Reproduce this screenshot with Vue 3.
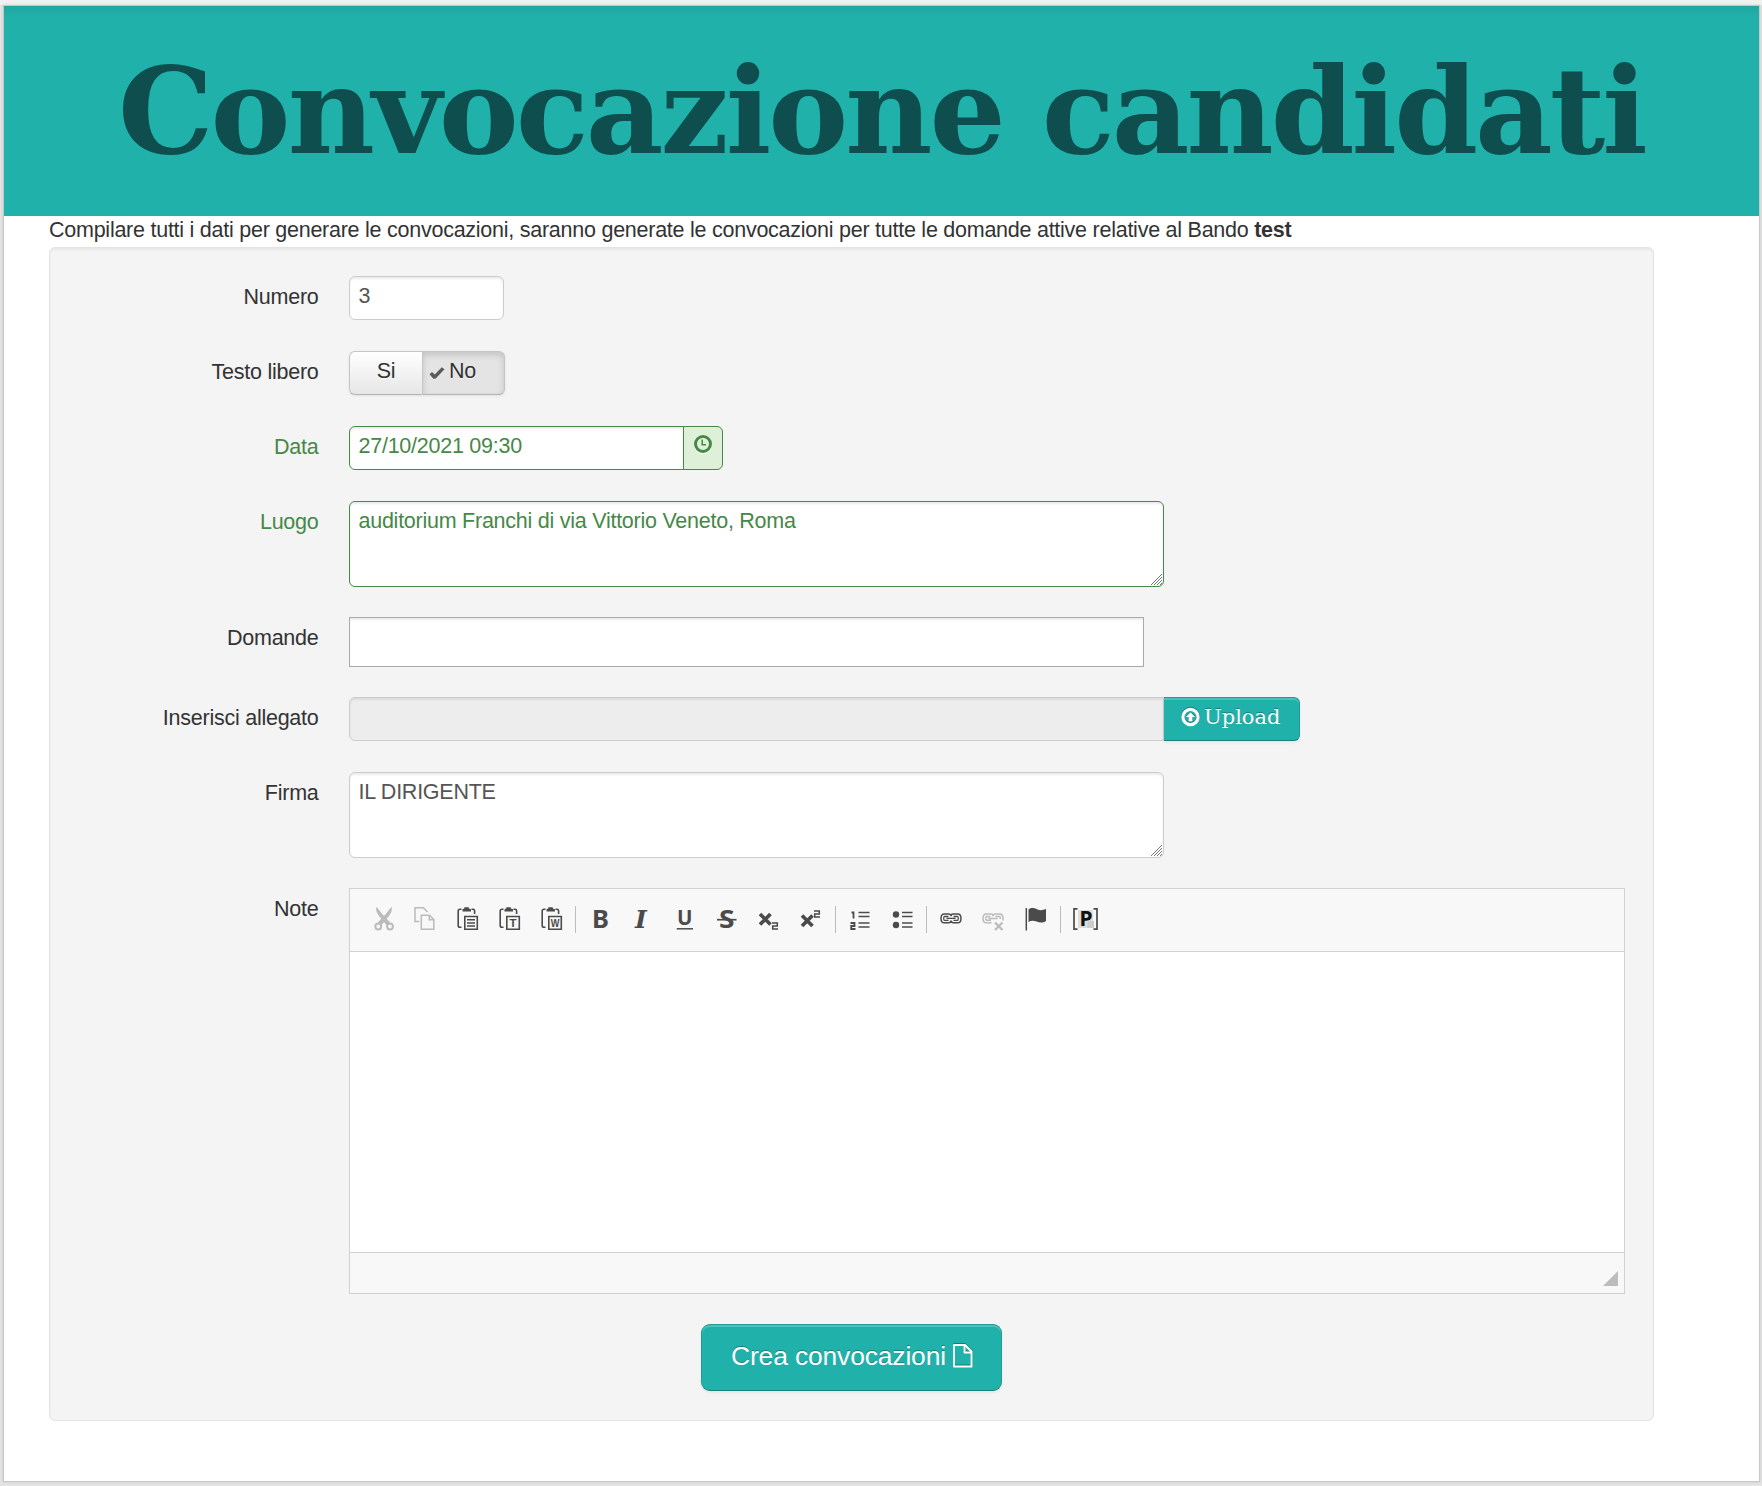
<script setup>
import { ref } from 'vue'

const numero = ref('3')
const data = ref('27/10/2021 09:30')
const luogo = ref('auditorium Franchi di via Vittorio Veneto, Roma')
const domande = ref('')
const firma = ref('IL DIRIGENTE')
</script>

<template>
  <div class="screen">
    <main class="page">
      <header class="banner"><h1>Convocazione candidati</h1></header>
      <p class="intro">Compilare tutti i dati per generare le convocazioni, saranno generate le convocazioni per tutte le domande attive relative al Bando <b>test</b></p>

      <form class="well" @submit.prevent>
        <div class="row">
          <label>Numero</label>
          <input v-model="numero" class="field numero">
        </div>

        <div class="row">
          <label>Testo libero</label>
          <div class="toggle">
            <button type="button" class="si">Si</button>
            <button type="button" class="no">
              <svg width="16" height="14" viewBox="0 0 16 14"><path d="M.5 8.3 3 6l2.700 2.400L12.800 1.200 15.500 3.300 6.500 12.700H4.300Z" fill="#5c5c5c" /></svg>No
            </button>
          </div>
        </div>

        <div class="row ok">
          <label>Data</label>
          <div class="group">
            <input v-model="data" class="field data">
            <span class="addon">
              <svg width="20" height="21" viewBox="0 0 20 21">
                <circle cx="10" cy="11" r="7.500" fill="none" stroke="#fff" stroke-width="3" />
                <g fill="none" stroke="#468847"><circle cx="10" cy="10" r="7.500" stroke-width="3" /><path d="M9.200 5.500V10.800H13" stroke-width="1.500" /></g>
              </svg>
            </span>
          </div>
        </div>

        <div class="row tall ok">
          <label>Luogo</label>
          <div class="area">
            <textarea v-model="luogo" class="field"></textarea>
            <svg class="grip" width="11" height="11" viewBox="0 0 11 11"><path d="M0 11 11 0M3 11 11 3M6 11 11 6M9 11 11 9" /></svg>
          </div>
        </div>

        <div class="row mid">
          <label>Domande</label>
          <input v-model="domande" class="field domande">
        </div>

        <div class="row">
          <label>Inserisci allegato</label>
          <div class="group">
            <input class="field file" disabled>
            <button type="button" class="upload">
              <svg width="19" height="20" viewBox="0 0 19 20">
                <circle cx="9.500" cy="10" r="7.600" fill="none" stroke="#fff" stroke-width="3.100" />
                <path d="M9.500 5.300 14 10H11.300V14.300H7.700V10H5Z" fill="#fff" />
              </svg>
              <span>Upload</span>
            </button>
          </div>
        </div>

        <div class="row tall">
          <label>Firma</label>
          <div class="area">
            <textarea v-model="firma" class="field"></textarea>
            <svg class="grip" width="11" height="11" viewBox="0 0 11 11"><path d="M0 11 11 0M3 11 11 3M6 11 11 6M9 11 11 9" /></svg>
          </div>
        </div>

        <div class="row">
          <label>Note</label>
          <div class="editor">
            <div class="toolbar">
              <!-- cut -->
              <a class="off"><svg viewBox="0 0 24 24"><path d="M5 1.500C4.500 4 5.500 6 8 9L15 17.500 17 15.300 9.200 7ZM19 1.500C19.500 4 18.500 6 16 9L9 17.500 7 15.300 14.800 7Z" fill="#4b4b4b" stroke="#4b4b4b" stroke-width="1.500" /><g fill="none" stroke="#4b4b4b" stroke-width="2"><circle cx="6.300" cy="19.500" r="2.900" /><circle cx="18" cy="19.500" r="2.900" /></g></svg></a>
              <!-- copy -->
              <a class="off"><svg viewBox="0 0 24 24"><path d="M5.500 14.500H1V.800H9.500L13.500 5M7.300 8.200H15.500L19.800 12.500V22.300H7.300ZM15.300 8.500V12.700H19.500" fill="none" stroke="#4b4b4b" stroke-width="1.500" /></svg></a>
              <!-- paste -->
              <a><svg viewBox="0 0 24 24"><path d="M5.500 2.200H4Q2.200 2.200 2.200 4V18.500Q2.200 20.300 4 20.300H5.500M15.500 2.200H17Q18.600 2.200 18.600 4V7M8.800 9.500H21.300V22.300H8.800Z" fill="none" stroke="#4b4b4b" stroke-width="1.600" /><path d="M6.500 4.500V2.200L8.300 1.500V.300H12.800V1.500L15 2.200V4.500Z" fill="#4b4b4b" /><path d="M11 12.700H19M11 15.900H19M11 19.100H19" stroke="#4b4b4b" stroke-width="1.500" /></svg></a>
              <!-- paste as plain text -->
              <a><svg viewBox="0 0 24 24"><path d="M5.500 2.200H4Q2.200 2.200 2.200 4V18.500Q2.200 20.300 4 20.300H5.500M15.500 2.200H17Q18.600 2.200 18.600 4V7M8.800 9.500H21.300V22.300H8.800Z" fill="none" stroke="#4b4b4b" stroke-width="1.600" /><path d="M6.500 4.500V2.200L8.300 1.500V.300H12.800V1.500L15 2.200V4.500Z" fill="#4b4b4b" /><text x="15" y="20" font-size="11.500" font-weight="700" text-anchor="middle">T</text></svg></a>
              <!-- paste from Word -->
              <a><svg viewBox="0 0 24 24"><path d="M5.500 2.200H4Q2.200 2.200 2.200 4V18.500Q2.200 20.300 4 20.300H5.500M15.500 2.200H17Q18.600 2.200 18.600 4V7M8.800 9.500H21.300V22.300H8.800Z" fill="none" stroke="#4b4b4b" stroke-width="1.600" /><path d="M6.500 4.500V2.200L8.300 1.500V.300H12.800V1.500L15 2.200V4.500Z" fill="#4b4b4b" /><text x="10.700" y="19.800" font-size="11" font-weight="700" textLength="8.700" lengthAdjust="spacingAndGlyphs">W</text></svg></a>
              <i class="sep"></i>
              <a><svg viewBox="0 0 24 24"><text x="3" y="21.300" class="glyph" font-size="25.500">B</text></svg></a>
              <a><svg viewBox="0 0 24 24"><text x="4" y="21.300" class="slab">I</text></svg></a>
              <a><svg viewBox="0 0 24 24"><text x="4" y="18" class="glyph" font-size="22" textLength="15.500" lengthAdjust="spacingAndGlyphs">U</text><path d="M3.700 21.800H20" stroke="#4b4b4b" stroke-width="1.500" /></svg></a>
              <a><svg viewBox="0 0 24 24"><text x="4" y="21" class="glyph" font-size="25" textLength="15.500" lengthAdjust="spacingAndGlyphs">S</text><path d="M2 12.700H21.500" stroke="#4b4b4b" stroke-width="1.700" /></svg></a>
              <a><svg viewBox="0 0 24 24"><path d="M3 7 13.500 17.500M13.500 7 3 17.500" stroke="#4b4b4b" stroke-width="3.700" /><path d="M15 16H20.300V19H15.700V22H21" fill="none" stroke="#4b4b4b" stroke-width="1.500" /></svg></a>
              <a><svg viewBox="0 0 24 24"><path d="M3 8.500 13.500 19M13.500 8.500 3 19" stroke="#4b4b4b" stroke-width="3.700" /><path d="M15 4H20.300V7H15.700V10H21" fill="none" stroke="#4b4b4b" stroke-width="1.500" /></svg></a>
              <i class="sep shifted"></i>
              <a><svg viewBox="0 0 24 24"><path d="M3.500 5.500H5.500V11.500M2.500 16H6.500V19H3.200V22H7.500" fill="none" stroke="#4b4b4b" stroke-width="1.800" /><path d="M10.500 5.500H21.500M10.500 9.500H21.500M10.500 16H21.500M10.500 20H21.500" stroke="#4b4b4b" stroke-width="1.500" /></svg></a>
              <a><svg viewBox="0 0 24 24"><circle cx="6" cy="7.500" r="3.200" fill="#4b4b4b" /><circle cx="6" cy="18" r="3.200" fill="#4b4b4b" /><path d="M12 5.500H22.500M12 9.500H22.500M12 16H22.500M12 20H22.500" stroke="#4b4b4b" stroke-width="1.500" /></svg></a>
              <i class="sep shifted"></i>
              <a><svg viewBox="0 0 24 24"><g fill="none" stroke="#4b4b4b" stroke-width="1.500"><path d="M11 15.800H5.300Q2 15.800 2 11.400T5.300 7H9.700Q12 7 12 9.200M12 9.200Q12 7 14.300 7H18.700Q22 7 22 11.400T18.700 15.800H14.300Q12 15.800 12 13.600M12 13.600Q12 15.800 9.700 15.800" /><path d="M9.500 9.500H5.500Q4.700 9.500 4.700 11.400T5.500 13.300H9.500M14.500 9.500H18.500Q19.300 9.500 19.300 11.400T18.500 13.300H14.500M7.500 11.400H16.500" stroke-width="1.300" /></g></svg></a>
              <a class="off"><svg viewBox="0 0 24 24"><g fill="none" stroke="#4b4b4b" stroke-width="1.500"><path d="M10.500 15.800H5.300Q2 15.800 2 11.400T5.300 7H9.700Q12 7 12 9.200Q12 7 14.300 7H18.700Q22 7 22 11.400V13.500M9.500 9.500H5.500Q4.700 9.500 4.700 11.400T5.500 13.300H10M14.500 9.500H18.500Q19.300 9.500 19.300 12M7.500 11.400H16.500" /><path d="M14 15.500 21.500 23M21.500 15.500 14 23" stroke-width="2.200" /></g></svg></a>
              <a><svg viewBox="0 0 24 24"><path d="M3.300 1V23.500" stroke="#4b4b4b" stroke-width="1.500" /><path d="M5.500 2.500C8.500 .200 11.500 1 14.500 2.500 17.500 3.700 20 3 23 2V14C19.500 16.300 16.500 15.500 13.500 14.500 10.500 13.500 8 13.500 5.500 15Z" fill="#4b4b4b" /></svg></a>
              <i class="sep last"></i>
              <a><svg viewBox="0 0 24 24"><path d="M5 3H20V21H5Z" fill="#ddd" /><path d="M15 14H21V21H14Z" fill="#ccc" /><path d="M4.500 1.800H1V22.200H4.500M20.500 1.800H24V22.200H20.500" fill="none" stroke="#4b4b4b" stroke-width="1.700" /><text x="6.500" y="19" font-size="21" class="pee">P</text></svg></a>
            </div>
            <div class="content"></div>
            <div class="bottom"><svg width="15" height="15" viewBox="0 0 15 15"><path d="M15 0V15H0Z" fill="#bcbcbc" /></svg></div>
          </div>
        </div>

        <div class="actions">
          <button type="button" class="create">
            <span>Crea convocazioni</span>
            <svg width="20" height="24" viewBox="0 0 20 24">
              <path d="M1 1H12L18.500 7.500V22.500H1ZM11.500 1V8.500H18.500" fill="none" stroke="#fff" stroke-width="1.900" stroke-linejoin="round" />
            </svg>
          </button>
        </div>
      </form>
    </main>
  </div>
</template>

<style>
body { margin: 0; background: #e4e4e4; }
</style>

<style scoped>
* { box-sizing: border-box; }
.screen {
  width: 1762px; height: 1486px; overflow: hidden; padding: 5px 2px 0 3px;
  background: linear-gradient(#f1f1f1 5px, #e4e4e4 5px);
  font: 21.500px/30px "Liberation Sans", Arial, sans-serif; letter-spacing: -.25px; color: #333;
}
.page { width: 1757px; height: 1477px; border: 1px solid #c8c8c8; background: #fff; box-shadow: 0 0 3px rgba(0,0,0,.12); }
.banner {
  height: 210px; text-align: center;
  background: linear-gradient(#20a7a0, #20b2aa 12px);
}
h1 {
  margin: 0; padding-top: 40px; font: bold 120px/130px "DejaVu Serif", serif;
  letter-spacing: -3px; color: #0e4e4e; white-space: nowrap;
}
.intro { margin: 0; padding-left: 45px; height: 31px; line-height: 29px; white-space: nowrap; }
.well {
  margin-left: 45px; width: 1605px; height: 1174px; padding-top: 28px;
  border: 1px solid #e3e3e3; border-radius: 6px; background: #f4f4f4;
  box-shadow: inset 0 2px 2px rgba(0,0,0,.05);
}
.row { display: flex; align-items: flex-start; height: 75px; }
.row.tall { height: 116px; }
.row.mid { height: 80px; }
label { width: 268.500px; margin-right: 30.500px; padding-top: 6px; text-align: right; }
.field {
  display: block; height: 44px; margin: 0; padding: 0 8.500px 3px; outline: 0;
  border: 1px solid #ccc; border-radius: 6px; background: #fff; color: #555;
  font: inherit; letter-spacing: inherit; box-shadow: inset 0 2px 2px rgba(0,0,0,.075);
}
.numero { width: 155px; }
.group { display: flex; }
.data { width: 335px; border-radius: 6px 0 0 6px; }
.addon {
  width: 40px; height: 44px; margin-left: -1px; padding: 7px 0 0 9px; line-height: 0;
  border: 1px solid #468847; border-radius: 0 6px 6px 0; background: #dff0d8;
}
.ok label, .ok .field { color: #468847; }
.ok .field { border-color: #468847; }
.area { position: relative; }
textarea.field { width: 815px; height: 86px; padding: 4px 8.500px; resize: none; overflow: hidden; }
.grip { position: absolute; right: 2px; bottom: 2px; fill: none; stroke: #777; stroke-width: 1; }
.domande { width: 795px; height: 50px; border-color: #aaa; border-radius: 0; }
.file { width: 815px; background: #ededed; border-radius: 6px 0 0 6px; }
button { margin: 0; font: inherit; letter-spacing: inherit; color: #333; }
.toggle { display: flex; border-radius: 6px; box-shadow: 0 1px 3px rgba(0,0,0,.08); }
.toggle button { height: 44px; border: 1px solid #c5c5c5; border-bottom-color: #b3b3b3; padding: 0 0 4px; text-shadow: 0 1px 1px rgba(255,255,255,.75); }
.toggle .si { width: 73px; border-right: 0; border-radius: 6px 0 0 6px; background: linear-gradient(#fff, #e6e6e6); }
.toggle .no {
  display: flex; align-items: center; width: 83px; padding-left: 6px; border-radius: 0 6px 6px 0;
  background: #e4e4e4; box-shadow: inset 0 3px 6px rgba(0,0,0,.15);
}
.no svg { margin: 4px 4px 0 0; }
.upload, .create {
  display: flex; background: #20b2aa; color: #fff; border: 1px solid #1c9c95; border-bottom-color: #16807a;
  text-shadow: 0 -1px 0 rgba(0,0,0,.3); box-shadow: inset 0 2px 0 rgba(255,255,255,.2), 0 2px 3px rgba(0,0,0,.06);
}
.upload svg, .create svg { filter: drop-shadow(0 -1px 0 rgba(0,0,0,.3)); }
.upload {
  width: 136px; height: 44px; padding: 4px 0 0 17px; gap: 4px; border-left: 0; border-radius: 0 6px 6px 0;
  font-family: "DejaVu Serif", serif; font-size: 21px; letter-spacing: 0;
}
.upload svg { margin-top: 5px; }
.editor { width: 1276px; height: 406px; border: 1px solid #d1d1d1; background: #fff; }
.toolbar { display: flex; height: 63px; padding: 18px 0 0 13px; background: #f8f8f8; border-bottom: 1px solid #d1d1d1; }
.toolbar a { width: 42px; padding-left: 9px; line-height: 0; }
.toolbar svg { width: 24px; height: 24px; overflow: visible; }
.toolbar text { fill: #4b4b4b; font-family: "Liberation Sans", sans-serif; letter-spacing: 0; }
.toolbar .glyph { font-weight: 700; font-family: "Noto Sans", sans-serif; }
.toolbar .slab { font: italic bold 25px "DejaVu Serif", serif; }
.toolbar .pee { fill: #111; font-weight: 700; font-family: "Noto Sans", sans-serif; }
.off { opacity: .35; }
.sep { width: 1px; height: 27px; margin: -1px 4px 0 2px; background: #bcbcbc; }
.sep.shifted { margin: -1px 3px 0; }
.sep.last { margin: -1px 3px 0 4px; }
.content { height: 300px; }
.bottom { height: 41px; display: flex; justify-content: flex-end; padding: 18px 6px 0 0; background: #f8f8f8; border-top: 1px solid #d1d1d1; }
.actions { display: flex; margin: 361px 0 0 651px; }
.create {
  width: 301px; height: 67px; padding: 16px 0 0 29px; gap: 7px; border-radius: 9px;
  font-size: 26.500px; letter-spacing: -.18px; white-space: nowrap;
}
.create svg { margin-top: 3px; }
</style>
